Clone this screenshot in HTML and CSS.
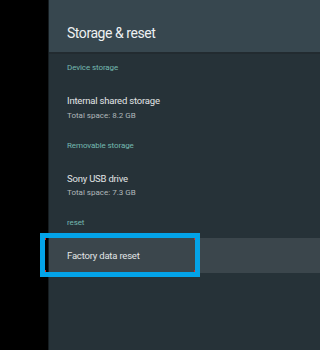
FILE: index.html
```html
<!DOCTYPE html>
<html>
<head>
<meta charset="utf-8">
<link rel="stylesheet" href="styles.css">
</head>
<body>
<div class="screen">
  <div class="side"></div>
  <div class="panel">
    <div class="header"><div class="title">Storage &amp; reset</div></div>
    <div class="list">
      <div class="category first">Device storage</div>
      <div class="item">
        <div class="item-title">Internal shared storage</div>
        <div class="item-sub">Total space: 8.2 GB</div>
      </div>
      <div class="category">Removable storage</div>
      <div class="item">
        <div class="item-title">Sony USB drive</div>
        <div class="item-sub">Total space: 7.3 GB</div>
      </div>
      <div class="category">reset</div>
      <div class="row">
        <div class="row-title">Factory data reset</div>
        <div class="focus"></div>
      </div>
    </div>
  </div>
</div>
</body>
</html>
```

FILE: styles.css
```css
html, body {
  margin: 0;
  padding: 0;
  background: #000;
}
body {
  font-family: Roboto, "Noto Sans", sans-serif;
  height: 350px;
  overflow: hidden;
}
.screen {
  display: flex;
  width: 100%;
  height: 350px;
}
.side {
  width: 48px;
  flex: none;
  background: #000;
}
.panel {
  flex: 1;
  background: #263238;
  border-left: 1px solid #161d21;
}
.header {
  box-sizing: border-box;
  height: 54px;
  padding: 22.5px 0 0 18px;
  background: #37474f;
  border-bottom: 2px solid #222b30;
}
.title {
  font-size: 14px;
  letter-spacing: -0.45px;
  line-height: 20px;
  color: #eef1f2;
}
.list {
  display: flex;
  flex-direction: column;
}
.category {
  margin-top: 17px;
  padding-left: 18px;
  font-size: 8px;
  letter-spacing: -0.1px;
  line-height: 14px;
  color: #74b9b0;
}
.category.first {
  margin-top: 7px;
}
.item {
  padding: 19px 0 0 18px;
}
.item-title {
  font-size: 9.5px;
  letter-spacing: -0.2px;
  line-height: 14px;
  color: #e2e5e6;
}
.item-sub {
  margin-top: 1.5px;
  font-size: 8px;
  line-height: 12px;
  color: #b0b7ba;
}
.row {
  position: relative;
  margin-top: 8px;
  height: 35px;
  padding-left: 18px;
  background: #3b464c;
}
.row-title {
  font-size: 9.5px;
  letter-spacing: -0.2px;
  line-height: 35px;
  color: #e2e5e6;
}
.focus {
  position: absolute;
  left: -9px;
  top: -5px;
  width: 150px;
  height: 34px;
  border: 5px solid #03a3e8;
  background:
    linear-gradient(#e0201c, #e0201c) left top / 1px 2px no-repeat,
    linear-gradient(#e0201c, #e0201c) right top / 1px 2px no-repeat,
    linear-gradient(#e0201c, #e0201c) left bottom / 1px 2px no-repeat,
    linear-gradient(#e0201c, #e0201c) right bottom / 1px 2px no-repeat;
}
```
